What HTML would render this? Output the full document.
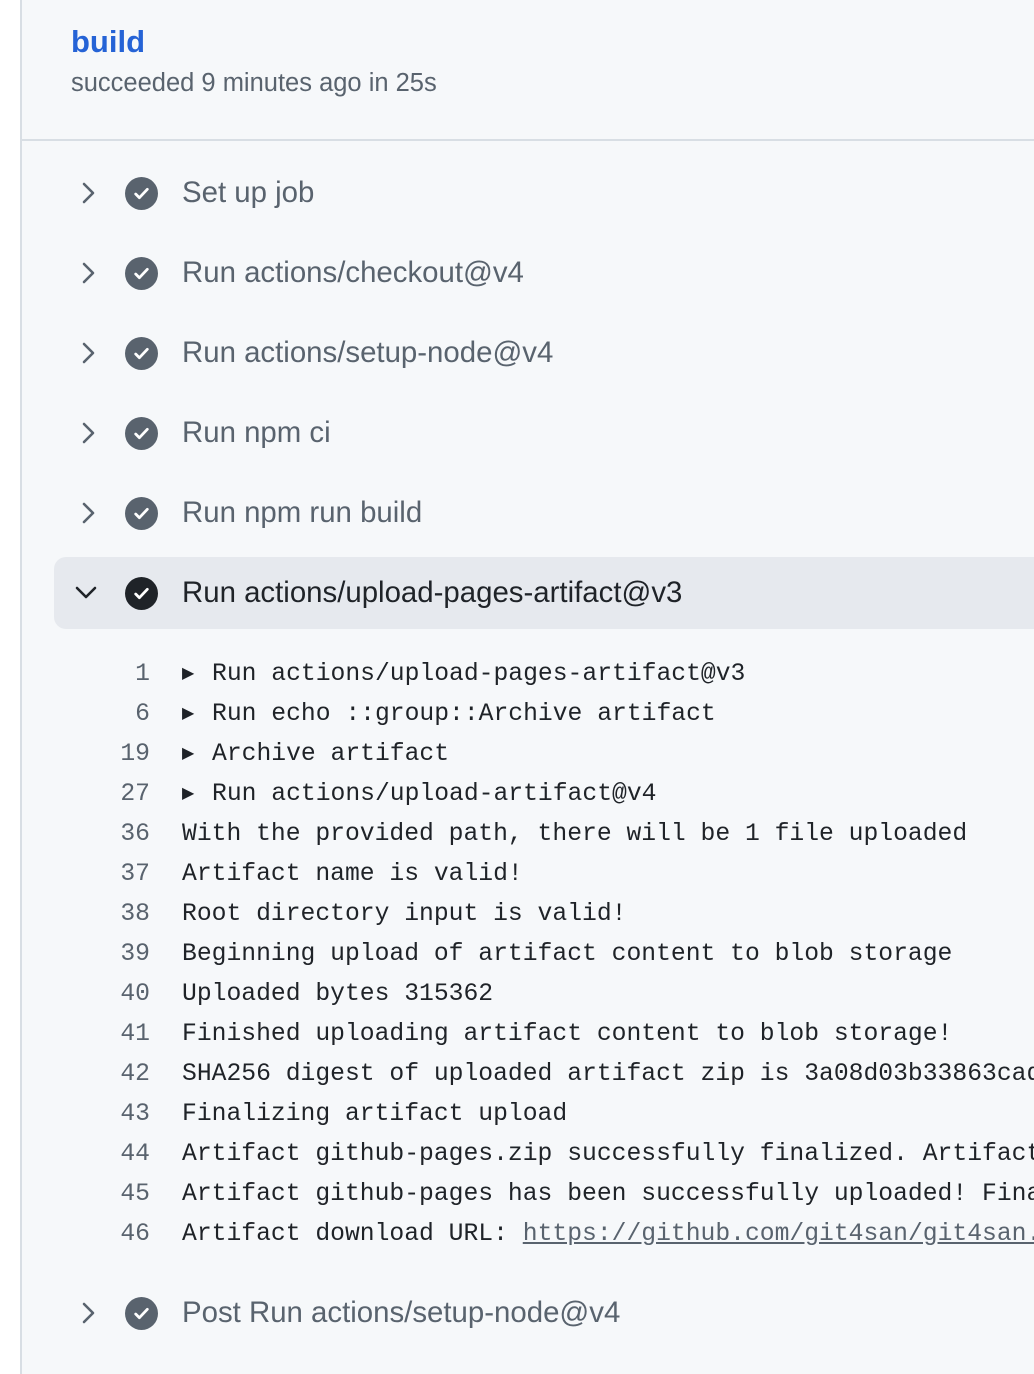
<!DOCTYPE html>
<html><head><style>
body{margin:0;width:1034px;height:1374px;overflow:hidden;background:#fff;font-family:"Liberation Sans",sans-serif}
.main{position:absolute;left:20px;top:0;width:1014px;height:1374px;background:#f6f8fa;border-left:2px solid #d8dee4;box-sizing:border-box}
.hdr{position:absolute;left:0;top:0;right:0;height:139px;border-bottom:2px solid #d8dee4}
.title{position:absolute;left:49px;top:24px;font-size:31px;font-weight:bold;color:#2563d6}
.sub{position:absolute;left:49px;top:69px;font-size:25.5px;color:#59636e}
.step{position:absolute;height:72px;border-radius:12px}
.step.sel{background:#e6e9ee}
.step svg.ch{position:absolute;left:24px;top:24px}
.step .ic{position:absolute;left:71px;top:20px;width:33px;height:33px;border-radius:50%;background:#59636e}
.step.sel .ic{background:#1f2328}
.step .ic svg{position:absolute;left:7px;top:7px}
.step .lb{position:absolute;left:128px;top:19px;font-size:29.4px;color:#59636e;white-space:nowrap}
.step.sel .lb{color:#1f2328}
.code{position:absolute;left:0;top:654px;font-family:"Liberation Mono",monospace;font-size:24.7px;color:#1f2328;white-space:pre}
.ln{position:absolute;height:40px;line-height:40px;white-space:pre}
.num{position:absolute;width:130px;left:20px;text-align:right;color:#59636e}
.t{position:absolute;left:182px}
.a{position:absolute;left:182px;font-size:16px}
.a + .t{left:212px}
a{color:#59636e;text-decoration:underline}
</style></head><body>
<div class="main">
<div class="hdr"><div class="title">build</div><div class="sub">succeeded 9 minutes ago in 25s</div></div>
</div>

<div style="position:absolute;left:0;top:0;width:1034px;height:1374px">
<div class="step" style="top:157px;left:54px;right:0"><svg class="ch" width="20" height="24" viewBox="0 0 20 24"><path d="M6 3l9 9-9 9" fill="none" stroke="#59636e" stroke-width="2.6" stroke-linecap="round" stroke-linejoin="round"/></svg><div class="ic"><svg width="19" height="19" viewBox="0 0 18 18"><path d="M3.5 9.5l3.5 3.5 7.5-8" fill="none" stroke="#fff" stroke-width="2.6" stroke-linecap="round" stroke-linejoin="round"/></svg></div><div class="lb">Set up job</div></div>
<div class="step" style="top:237px;left:54px;right:0"><svg class="ch" width="20" height="24" viewBox="0 0 20 24"><path d="M6 3l9 9-9 9" fill="none" stroke="#59636e" stroke-width="2.6" stroke-linecap="round" stroke-linejoin="round"/></svg><div class="ic"><svg width="19" height="19" viewBox="0 0 18 18"><path d="M3.5 9.5l3.5 3.5 7.5-8" fill="none" stroke="#fff" stroke-width="2.6" stroke-linecap="round" stroke-linejoin="round"/></svg></div><div class="lb">Run actions/checkout@v4</div></div>
<div class="step" style="top:317px;left:54px;right:0"><svg class="ch" width="20" height="24" viewBox="0 0 20 24"><path d="M6 3l9 9-9 9" fill="none" stroke="#59636e" stroke-width="2.6" stroke-linecap="round" stroke-linejoin="round"/></svg><div class="ic"><svg width="19" height="19" viewBox="0 0 18 18"><path d="M3.5 9.5l3.5 3.5 7.5-8" fill="none" stroke="#fff" stroke-width="2.6" stroke-linecap="round" stroke-linejoin="round"/></svg></div><div class="lb">Run actions/setup-node@v4</div></div>
<div class="step" style="top:397px;left:54px;right:0"><svg class="ch" width="20" height="24" viewBox="0 0 20 24"><path d="M6 3l9 9-9 9" fill="none" stroke="#59636e" stroke-width="2.6" stroke-linecap="round" stroke-linejoin="round"/></svg><div class="ic"><svg width="19" height="19" viewBox="0 0 18 18"><path d="M3.5 9.5l3.5 3.5 7.5-8" fill="none" stroke="#fff" stroke-width="2.6" stroke-linecap="round" stroke-linejoin="round"/></svg></div><div class="lb">Run npm ci</div></div>
<div class="step" style="top:477px;left:54px;right:0"><svg class="ch" width="20" height="24" viewBox="0 0 20 24"><path d="M6 3l9 9-9 9" fill="none" stroke="#59636e" stroke-width="2.6" stroke-linecap="round" stroke-linejoin="round"/></svg><div class="ic"><svg width="19" height="19" viewBox="0 0 18 18"><path d="M3.5 9.5l3.5 3.5 7.5-8" fill="none" stroke="#fff" stroke-width="2.6" stroke-linecap="round" stroke-linejoin="round"/></svg></div><div class="lb">Run npm run build</div></div>
<div class="step sel" style="top:557px;left:54px;right:0;border-radius:12px 0 0 12px"><svg class="ch" width="24" height="24" viewBox="0 0 24 24" style="left:20px"><path d="M3 7l9 9 9-9" fill="none" stroke="#1f2328" stroke-width="2.6" stroke-linecap="round" stroke-linejoin="round"/></svg><div class="ic"><svg width="19" height="19" viewBox="0 0 18 18"><path d="M3.5 9.5l3.5 3.5 7.5-8" fill="none" stroke="#fff" stroke-width="2.6" stroke-linecap="round" stroke-linejoin="round"/></svg></div><div class="lb">Run actions/upload-pages-artifact@v3</div></div>
<div class="step" style="top:1277px;left:54px;right:0"><svg class="ch" width="20" height="24" viewBox="0 0 20 24"><path d="M6 3l9 9-9 9" fill="none" stroke="#59636e" stroke-width="2.6" stroke-linecap="round" stroke-linejoin="round"/></svg><div class="ic"><svg width="19" height="19" viewBox="0 0 18 18"><path d="M3.5 9.5l3.5 3.5 7.5-8" fill="none" stroke="#fff" stroke-width="2.6" stroke-linecap="round" stroke-linejoin="round"/></svg></div><div class="lb">Post Run actions/setup-node@v4</div></div>

<div class="code">
<div class="ln" style="top:0"><span class="num">1</span><span class="a">▶</span><span class="t">Run actions/upload-pages-artifact@v3</span></div>
<div class="ln" style="top:40px"><span class="num">6</span><span class="a">▶</span><span class="t">Run echo ::group::Archive artifact</span></div>
<div class="ln" style="top:80px"><span class="num">19</span><span class="a">▶</span><span class="t">Archive artifact</span></div>
<div class="ln" style="top:120px"><span class="num">27</span><span class="a">▶</span><span class="t">Run actions/upload-artifact@v4</span></div>
<div class="ln" style="top:160px"><span class="num">36</span><span class="t">With the provided path, there will be 1 file uploaded</span></div>
<div class="ln" style="top:200px"><span class="num">37</span><span class="t">Artifact name is valid!</span></div>
<div class="ln" style="top:240px"><span class="num">38</span><span class="t">Root directory input is valid!</span></div>
<div class="ln" style="top:280px"><span class="num">39</span><span class="t">Beginning upload of artifact content to blob storage</span></div>
<div class="ln" style="top:320px"><span class="num">40</span><span class="t">Uploaded bytes 315362</span></div>
<div class="ln" style="top:360px"><span class="num">41</span><span class="t">Finished uploading artifact content to blob storage!</span></div>
<div class="ln" style="top:400px"><span class="num">42</span><span class="t">SHA256 digest of uploaded artifact zip is 3a08d03b33863cad</span></div>
<div class="ln" style="top:440px"><span class="num">43</span><span class="t">Finalizing artifact upload</span></div>
<div class="ln" style="top:480px"><span class="num">44</span><span class="t">Artifact github-pages.zip successfully finalized. Artifact</span></div>
<div class="ln" style="top:520px"><span class="num">45</span><span class="t">Artifact github-pages has been successfully uploaded! Final</span></div>
<div class="ln" style="top:560px"><span class="num">46</span><span class="t">Artifact download URL: <a>https://github.com/git4san/git4san.</a></span></div>
</div>
</div>
</body></html>
